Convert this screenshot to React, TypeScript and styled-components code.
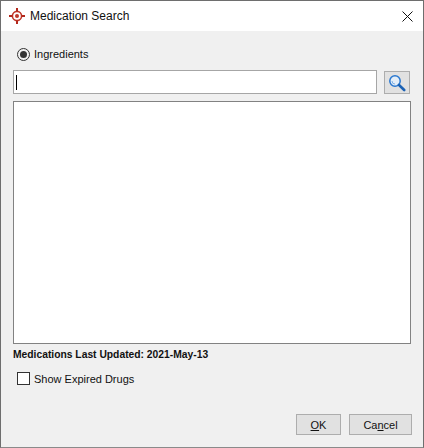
import { createGlobalStyle, styled } from 'styled-components';

const Global = createGlobalStyle`
  html, body {
    margin: 0;
    padding: 0;
    background: #f0f0f0;
  }
`;

function AppLogo() {
  return (
    <svg width="16" height="16" viewBox="0 0 16 16">
      <circle cx="8" cy="8" r="4.6" fill="none" stroke="#c0392b" strokeWidth="1.6" />
      <circle cx="8" cy="8" r="2" fill="#c0392b" />
      <path d="M8 0v3.4M8 12.6V16M0 8h3.4M12.6 8H16" stroke="#b3281c" strokeWidth="2" />
    </svg>
  );
}

function CloseIcon() {
  return (
    <svg width="11" height="11" viewBox="0 0 11 11">
      <path d="M0.5 0.5l10 10M10.5 0.5l-10 10" stroke="#111" strokeWidth="1" />
    </svg>
  );
}

function SearchIcon() {
  return (
    <svg width="18" height="18" viewBox="0 0 18 18">
      <circle cx="7" cy="7" r="5.2" fill="#e4eef8" stroke="#2a78d0" strokeWidth="1.5" />
      <path d="M4 7a3 3 0 0 0 3 3" fill="none" stroke="#7db0e6" strokeWidth="1" />
      <path d="M11 11l5.2 5" stroke="#1c62b4" strokeWidth="2.6" strokeLinecap="round" />
    </svg>
  );
}

export default function App() {
  return (
    <>
      <Global />
      <Dialog>
        <TitleBar>
          <TitleLeft>
            <AppLogo />
            <Title>Medication Search</Title>
          </TitleLeft>
          <CloseButton>
            <CloseIcon />
          </CloseButton>
        </TitleBar>
        <Body>
          <OptionRow>
            <RadioMark />
            <span>Ingredients</span>
          </OptionRow>
          <SearchRow>
            <SearchField>
              <Caret />
            </SearchField>
            <SearchButton>
              <SearchIcon />
            </SearchButton>
          </SearchRow>
          <ResultList />
          <UpdatedLabel>Medications Last Updated: 2021-May-13</UpdatedLabel>
          <ExpiredRow>
            <CheckMark />
            <span>Show Expired Drugs</span>
          </ExpiredRow>
          <Footer>
            <ActionButton $width={45}>
              <u>O</u>K
            </ActionButton>
            <ActionButton $width={63}>
              Ca<u>n</u>cel
            </ActionButton>
          </Footer>
        </Body>
      </Dialog>
    </>
  );
}

const Dialog = styled.div`
  width: 424px;
  height: 448px;
  box-sizing: border-box;
  border: 1px solid #6e6e6e;
  border-bottom-color: #8a8a8a;
  display: flex;
  flex-direction: column;
  background: #f0f0f0;
  font-family: 'Liberation Sans', Arial, sans-serif;
  color: #111;
  overflow: hidden;
`;

const TitleBar = styled.div`
  height: 30px;
  background: #fff;
  display: flex;
  align-items: center;
  justify-content: space-between;
  padding: 0 10px 0 8px;
  flex-shrink: 0;
`;

const TitleLeft = styled.div`
  display: flex;
  align-items: center;
  gap: 5px;
`;

const Title = styled.div`
  font-size: 12px;
`;

const CloseButton = styled.div`
  display: flex;
  align-items: center;
`;

const Body = styled.div`
  flex: 1;
  display: flex;
  flex-direction: column;
  padding: 16px 12px 12px 12px;
`;

const OptionRow = styled.div`
  display: flex;
  align-items: center;
  gap: 4px;
  height: 14px;
  padding-left: 4px;
  font-size: 11px;
`;

const RadioMark = styled.div`
  width: 13px;
  height: 13px;
  box-sizing: border-box;
  border: 1px solid #333;
  border-radius: 50%;
  display: flex;
  align-items: center;
  justify-content: center;

  &::after {
    content: '';
    width: 7px;
    height: 7px;
    border-radius: 50%;
    background: #333;
  }
`;

const SearchRow = styled.div`
  display: flex;
  align-items: flex-start;
  justify-content: space-between;
  margin-top: 9px;
`;

const SearchField = styled.div`
  width: 364px;
  height: 24px;
  box-sizing: border-box;
  border: 1px solid #a6a6a6;
  background: #fff;
  display: flex;
  align-items: center;
  padding-left: 2px;
`;

const Caret = styled.div`
  width: 1px;
  height: 15px;
  background: #000;
`;

const SearchButton = styled.div`
  width: 26px;
  height: 23px;
  margin-top: 1px;
  margin-right: 1px;
  box-sizing: border-box;
  border: 1px solid #adadad;
  background: #e1e1e1;
  display: flex;
  align-items: center;
  justify-content: center;
`;

const ResultList = styled.div`
  height: 243px;
  margin-top: 7px;
  box-sizing: border-box;
  border: 1px solid #828282;
  background: #fff;
`;

const UpdatedLabel = styled.div`
  margin-top: 5px;
  font-size: 10.3px;
  font-weight: bold;
  line-height: 12px;
`;

const ExpiredRow = styled.div`
  display: flex;
  align-items: center;
  gap: 4px;
  margin-top: 11px;
  padding-left: 4px;
  font-size: 11px;
  height: 13px;
`;

const CheckMark = styled.div`
  width: 13px;
  height: 13px;
  box-sizing: border-box;
  border: 1px solid #333;
  background: #fff;
`;

const Footer = styled.div`
  margin-top: auto;
  margin-right: -1px;
  display: flex;
  justify-content: flex-end;
  gap: 8px;
`;

const ActionButton = styled.div<{ $width: number }>`
  width: ${(p) => p.$width}px;
  height: 21px;
  box-sizing: border-box;
  border: 1px solid #adadad;
  background: #e1e1e1;
  display: flex;
  align-items: center;
  justify-content: center;
  font-size: 11px;
  white-space: pre;
`;
